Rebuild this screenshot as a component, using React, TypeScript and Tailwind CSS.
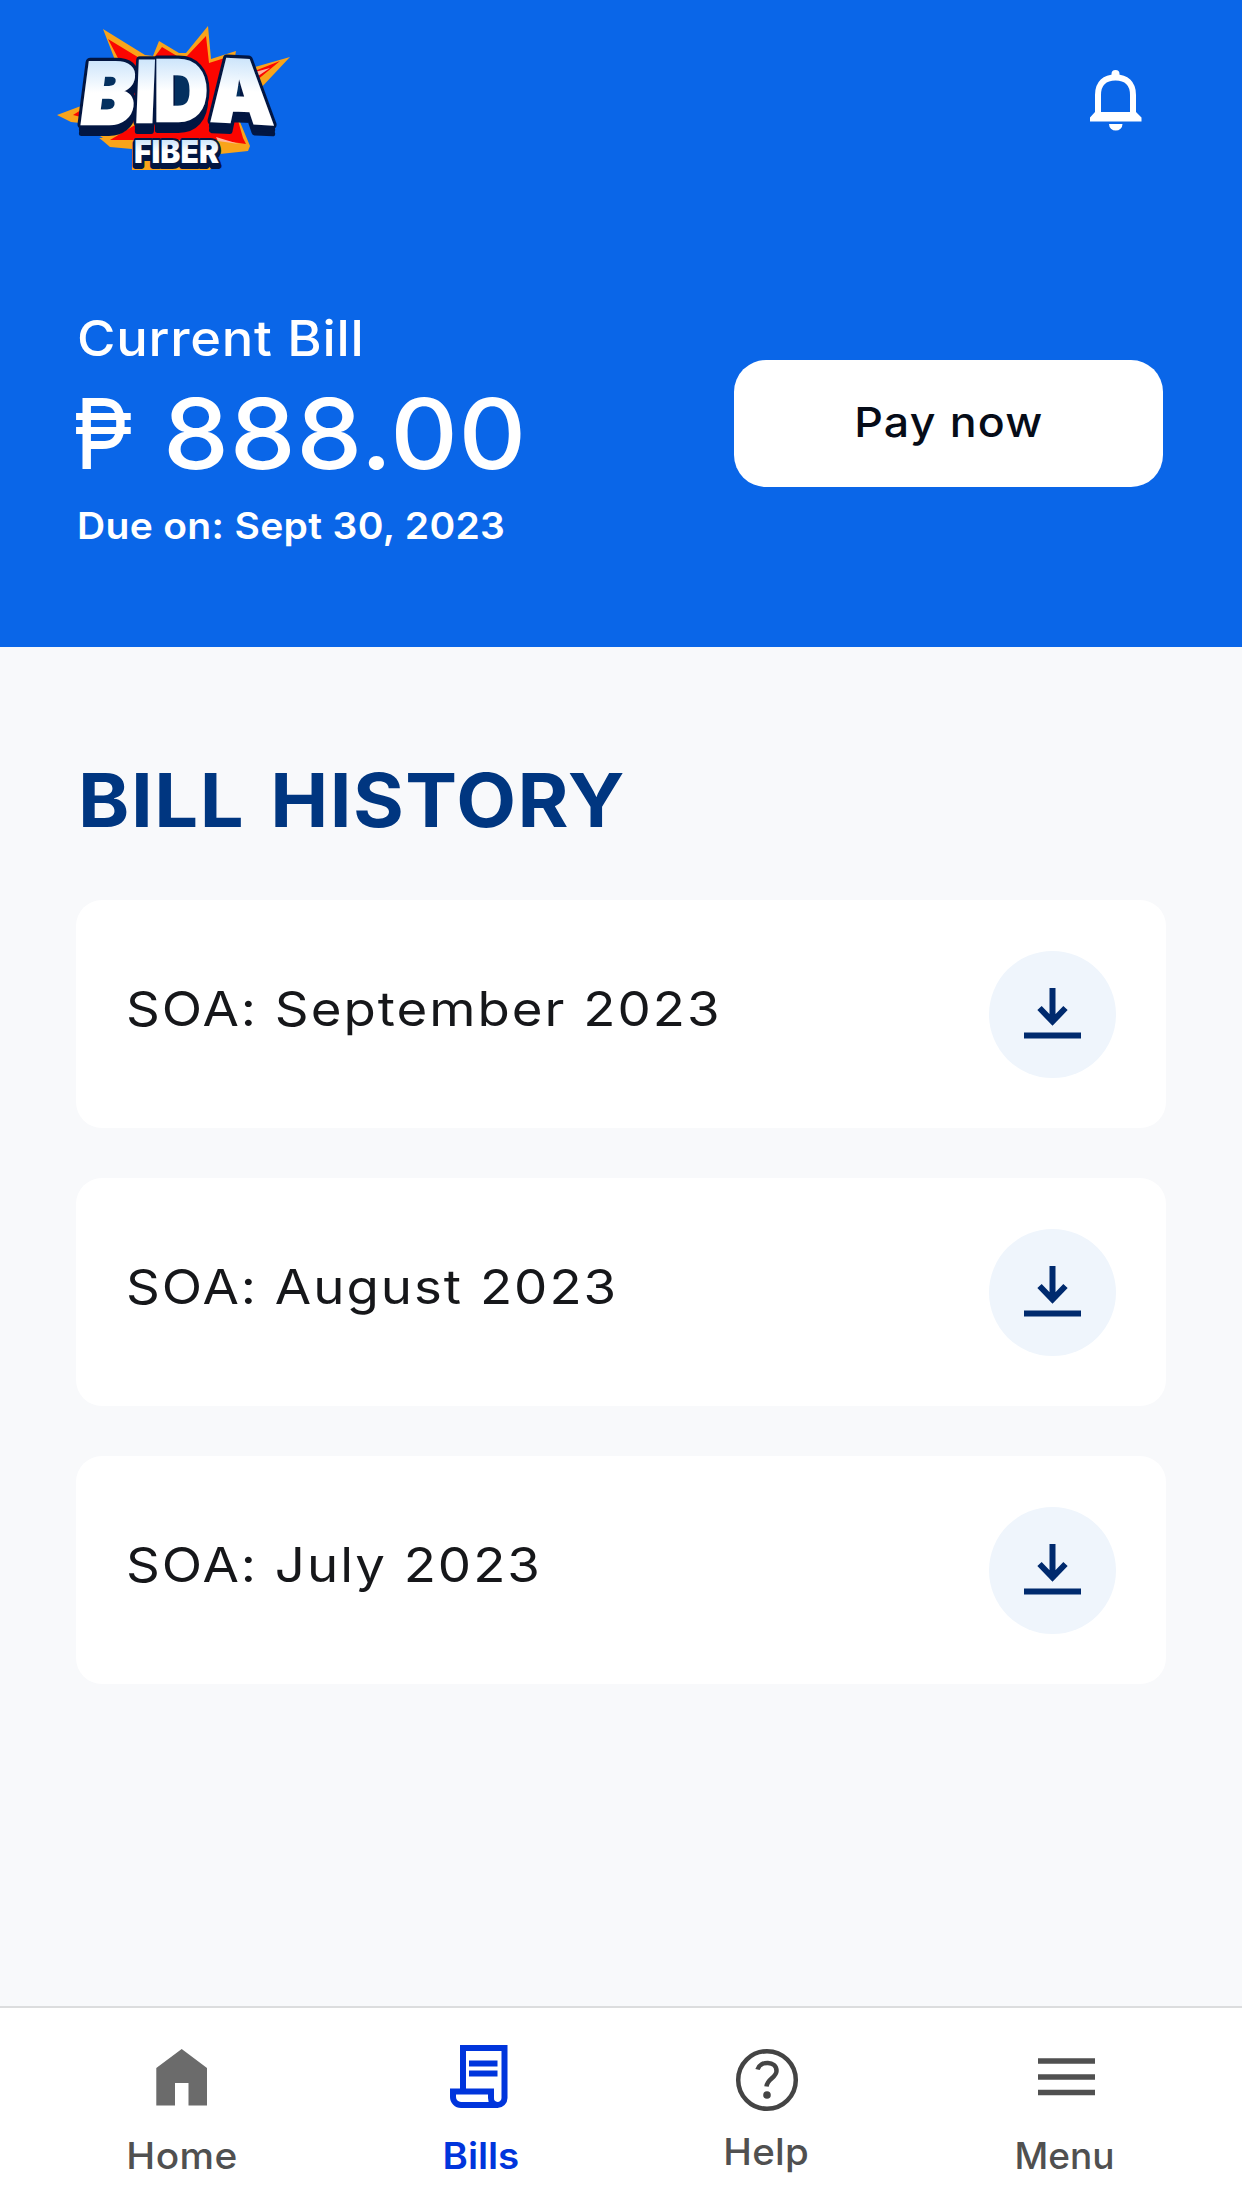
import React from 'react';

interface Statement {
  id: string;
  label: string;
}

const statements: Statement[] = [
  { id: '2023-09', label: 'SOA: September 2023' },
  { id: '2023-08', label: 'SOA: August 2023' },
  { id: '2023-07', label: 'SOA: July 2023' },
];

// Word mark letters, each one squeezed and slanted on its own
const logoLetters = [
  { char: 'B', transform: 'matrix(0.95 0 -0.13 1 38 114)' },
  { char: 'I', transform: 'matrix(0.84 0 -0.04 0.99 94 112)' },
  { char: 'D', transform: 'matrix(0.88 0 0 0.98 114 111)' },
  { char: 'A', transform: 'matrix(0.95 0.05 0.06 1.02 170 111)' },
];

const Logo = () => (
  <svg className="w-[270px] h-[180px]" viewBox="0 0 270 180" fontFamily="Inter, sans-serif" fontWeight={900}>
    <defs>
      <linearGradient id="letterFill" x1="0" y1="0" x2="0" y2="1">
        <stop offset="0.2" stopColor="#cfe6fb" />
        <stop offset="0.5" stopColor="#ffffff" />
      </linearGradient>
    </defs>
    <path
      fill="#f9a41a"
      d="M63 19L105 45L113 46L119 31L139 43L146 43L168 16L171 49L196 41L194 52L211 58L250 47L219 80L200 112L210 136L208 141L180 144L170 160H92V139L70 137L63 131L40 113L31 112L17 105L41 96L75 50Z"
    />
    <path fill="#0a66e8" d="M63 128L40 113L36 128L64 128Z" />
    <path
      fill="#fb0500"
      d="M68 29L101 49H113L122 37L137 46H147L166 26L169 53L188 47V62L212 62L240 51L216 71L195 100L203 128L206 134L178 130H70L95 115L68 70L80 52ZM33 105L41 100V107Z"
    />
    <path fill="#ffb4a0" d="M212 70L230 58L215 62ZM176 127L199 134L178 131Z" />
    <g fill="#021642" stroke="#021642" strokeLinejoin="round" fontSize="85">
      {[9, 5, 0].map((dy) => (
        <g key={dy} transform={`translate(0 ${dy})`} strokeWidth={dy ? 6 : 9}>
          {logoLetters.map((l) => (
            <text key={l.char} transform={l.transform}>{l.char}</text>
          ))}
        </g>
      ))}
      {/* backing that shows through the counters */}
      <path d="M64 64H78V103H61ZM135 64H155V100H135ZM192 75H200V90H190Z" stroke="none" fill="#04305f" />
    </g>
    <g fill="url(#letterFill)" stroke="url(#letterFill)" strokeWidth="2.500" fontSize="85">
      {logoLetters.map((l) => (
        <text key={l.char} transform={l.transform}>{l.char}</text>
      ))}
    </g>
    <g fontSize="31" transform="translate(94 153)">
      <text textLength="85" lengthAdjust="spacingAndGlyphs" y="3" fill="#021642" stroke="#021642" strokeWidth="6" strokeLinejoin="round">
        FIBER
      </text>
      <text textLength="85" lengthAdjust="spacingAndGlyphs" fill="#021642" stroke="#021642" strokeWidth="4" strokeLinejoin="round">
        FIBER
      </text>
      <text textLength="85" lengthAdjust="spacingAndGlyphs" fill="url(#letterFill)">
        FIBER
      </text>
    </g>
  </svg>
);

const BellIcon = () => (
  <svg className="w-[60px] h-[70px] mt-[57px]" viewBox="0 0 60 70" fill="none">
    <path d="M12 49V28C12 16 19 10.500 29.500 10.500S47 16 47 28V49" stroke="#fff" strokeWidth="6" />
    <path d="M25.500 10V7A4 4 0 0 1 33.500 7V10Z" fill="#fff" />
    <path d="M9 45H50L55.500 50.500V54.500H4V50.500ZM23 57H36.500A6.700 6.500 0 0 1 23 57Z" fill="#fff" />
  </svg>
);

const DownloadIcon = () => (
  <svg className="w-[64px] h-[64px]" viewBox="0 0 64 64" fill="none" stroke="#002a6e" strokeWidth="6">
    <path d="M31.500 6V39M18.500 26L31.500 39.500L44.500 26" />
    <path d="M3 53.500H60" />
  </svg>
);

const HomeIcon = () => (
  <svg className="w-16 h-16" viewBox="0 0 64 64">
    <path d="M31.700 4L57 23V60.500H38.500V38H25V60.500H6.300V23Z" fill="#6b6b6b" />
  </svg>
);

const BillsIcon = () => (
  <svg className="w-16 h-16" viewBox="0 0 64 64" fill="none" stroke="#0035dc" strokeWidth="6">
    <path d="M14 46.500V3H55.500V53A7 7 0 0 1 48.500 60H12A8 8 0 0 1 4 52V46.500H42V53A6.800 6.800 0 0 0 48.500 60" />
    <path d="M20 18.500H48.500M20 28.500H48.500" />
  </svg>
);

const HelpIcon = () => (
  <svg className="w-16 h-16 overflow-visible" viewBox="0 0 64 64" fill="none" stroke="#444" strokeWidth="4.500">
    <circle cx="32" cy="35" r="28.800" />
    <path d="M22.500 24.500C25 15.500 41.500 15.500 41.500 26C41.500 32.500 32 34 31.500 41.500" />
    <circle cx="32" cy="50" r="3.800" fill="#444" stroke="none" />
  </svg>
);

const MenuIcon = () => (
  <svg className="w-16 h-16" viewBox="0 0 64 64" stroke="#505050" strokeWidth="5.500">
    <path d="M5 16H62M5 32H62M5 47.500H62" />
  </svg>
);

const App: React.FC = () => {
  return (
    <div className="w-full h-[2208px] flex flex-col bg-[#f8f9fb] font-[Inter,sans-serif] overflow-hidden">
      <header className="h-[647px] shrink-0 bg-[#0a66e8] text-white">
        <div className="flex items-start justify-between pt-[10px] pl-10 pr-[96px]">
          <Logo />
          <BellIcon />
        </div>
        <div className="flex items-start justify-between mt-[124px] pl-[77px] pr-[79px]">
          <div className="whitespace-nowrap">
            <p className="text-[49px] leading-none font-medium tracking-[0.7px] origin-left scale-x-[1.07]">Current Bill</p>
            <p className="flex mt-[22px] text-[98px] leading-none font-medium">
              <span className="w-[90px] -ml-1 font-normal origin-left scale-x-[0.92]">₱</span>
              <span className="tracking-[0.6px] origin-left scale-x-[1.07]">888.00</span>
            </p>
            <p className="mt-6 text-[37px] leading-none font-semibold tracking-[0.3px] origin-left scale-x-[1.055]">
              Due on: Sept 30, 2023
            </p>
          </div>
          <button className="w-[429px] h-[127px] mt-[46px] pb-[3px] rounded-[32px] bg-white text-[#060c18] text-[41px] leading-none font-medium tracking-[1.1px]">
            <span className="inline-block scale-x-[1.09]">Pay now</span>
          </button>
        </div>
      </header>

      <main className="flex-1 px-[76px] pt-[116px]">
        <h1 className="pl-0.5 text-[74px] leading-none font-bold tracking-[1.4px] [word-spacing:5px] origin-left scale-x-[1.05] text-[#003680]">
          BILL HISTORY
        </h1>
        <ul className="flex flex-col gap-[50px] mt-[63px]">
          {statements.map((s) => (
            <li key={s.id} className="h-[228px] flex items-center justify-between pl-[50px] pr-[50px] rounded-[26px] bg-white">
              <span className="pb-[11px] text-[48px] leading-none tracking-[1.8px] origin-left scale-x-110 text-[#16171a]">
                {s.label}
              </span>
              <button className="w-[127px] h-[127px] flex items-center justify-center rounded-full bg-[#eff5fc]">
                <DownloadIcon />
              </button>
            </li>
          ))}
        </ul>
      </main>

      <nav className="h-[202px] shrink-0 grid grid-cols-[300px_298px_273px_323px] pl-8 pt-[37px] border-t-2 border-[#dcddde] bg-white text-[37px] leading-none font-medium text-[#505050]">
        <a className="flex flex-col items-center gap-7">
          <HomeIcon />
          <span className="tracking-[0.4px] scale-x-105">Home</span>
        </a>
        <a className="flex flex-col items-center gap-7 text-[#0035dc] font-semibold">
          <BillsIcon />
          <span className="scale-x-[1.04]">Bills</span>
        </a>
        <a className="flex flex-col items-center gap-6">
          <HelpIcon />
          <span className="tracking-[0.2px] scale-x-[1.04]">Help</span>
        </a>
        <a className="flex flex-col items-center gap-7">
          <MenuIcon />
          <span>Menu</span>
        </a>
      </nav>
    </div>
  );
};

export default App;
